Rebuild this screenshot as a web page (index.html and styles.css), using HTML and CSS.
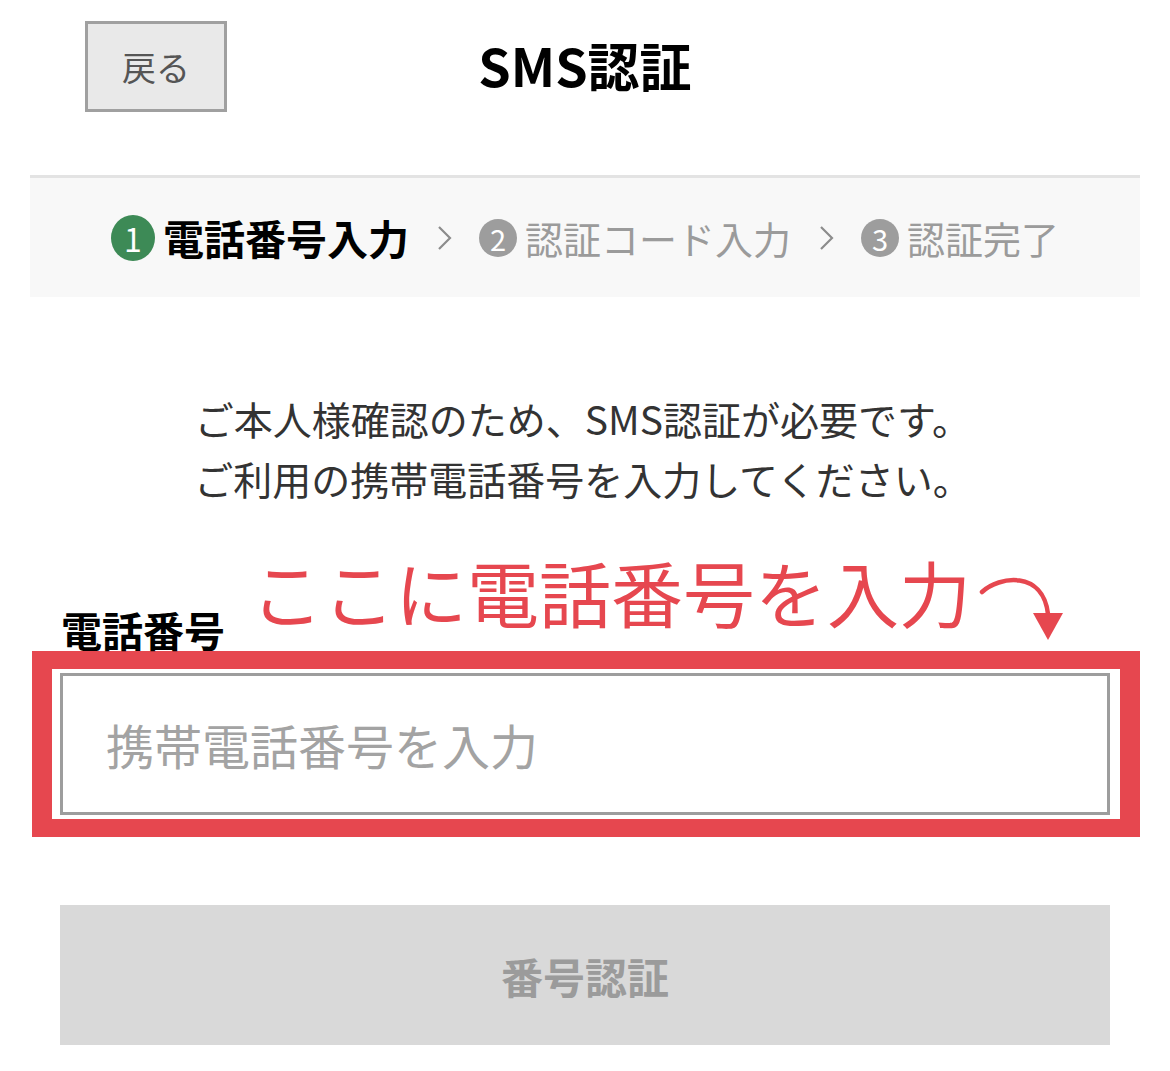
FILE: index.html
```html
<!DOCTYPE html>
<html lang="ja">
<head>
  <meta charset="UTF-8" />
  <meta name="viewport" content="width=device-width, initial-scale=1.0" />
  <title>SMS認証</title>
  <link rel="stylesheet" href="styles.css">
</head>
<body>
  <div class="page">
    <header class="top-bar">
      <button class="back-btn">戻る</button>
      <h1 class="title">SMS認証</h1>
      <div></div>
    </header>

    <div class="steps">
      <div class="step active">
        <span class="num">1</span>
        <span class="label">電話番号入力</span>
      </div>
      <svg class="chev" width="17" height="30" viewBox="0 0 17 30"><polyline points="3,4 14,15 3,26" fill="none" stroke="#8c8c8c" stroke-width="2.2"/></svg>
      <div class="step">
        <span class="num">2</span>
        <span class="label">認証コード入力</span>
      </div>
      <svg class="chev" width="17" height="30" viewBox="0 0 17 30"><polyline points="3,4 14,15 3,26" fill="none" stroke="#8c8c8c" stroke-width="2.2"/></svg>
      <div class="step">
        <span class="num">3</span>
        <span class="label">認証完了</span>
      </div>
    </div>

    <p class="lead">ご本人様確認のため、SMS認証が必要です。<br>ご利用の携帯電話番号を入力してください。</p>

    <div class="field-head">
      <label class="field-label" for="tel">電話番号</label>
      <span class="note">ここに電話番号を入力</span>
      <svg class="note-arrow" width="100" height="75" viewBox="0 0 100 75">
        <path d="M15 22 C 32 6, 76 0, 81 44" fill="none" stroke="#e6474f" stroke-width="4.5" stroke-linecap="round"/>
        <polygon points="66,43 96,43 81,70" fill="#e6474f"/>
      </svg>
    </div>

    <div class="mark">
      <input id="tel" class="tel-input" type="tel" placeholder="携帯電話番号を入力">
    </div>

    <button class="submit-btn" disabled>番号認証</button>
  </div>
</body>
</html>
```

FILE: styles.css
```css
body {
  margin: 0;
  background: #ffffff;
  font-family: "Noto Sans CJK JP", "Noto Sans", sans-serif;
  color: #000;
}
.page {
  width: 1050px;
  margin: 0 auto;
  padding-top: 21px;
}
.top-bar {
  display: grid;
  grid-template-columns: 1fr auto 1fr;
  align-items: center;
}
.back-btn {
  justify-self: start;
  margin-left: 25px;
  width: 142px;
  height: 91px;
  border: 3px solid #a0a0a0;
  background: #e9e9e9;
  color: #555;
  font-family: inherit;
  font-size: 34px;
  padding: 0;
  line-height: 1;
}
.title {
  margin: -3px 0 0;
  font-size: 52px;
  font-weight: bold;
  line-height: 1;
}
.steps {
  margin: 63px -30px 0;
  height: 119px;
  border-top: 3px solid #e3e3e3;
  background: #f8f8f8;
  display: flex;
  justify-content: center;
  align-items: center;
}
.step {
  display: flex;
  align-items: center;
  gap: 8px;
}
.step .num {
  width: 38px;
  height: 38px;
  border-radius: 50%;
  background: #9d9d9d;
  color: #fff;
  font-size: 29px;
  line-height: 38px;
  text-align: center;
}
.step .label {
  font-size: 38px;
  line-height: 1;
  color: #9b9b9b;
}
.step.active .num {
  width: 44px;
  height: 46px;
  line-height: 46px;
  background: #3d8a56;
  font-size: 32px;
}
.step.active .label {
  font-size: 41px;
  font-weight: bold;
  color: #000;
}
.chev {
  margin: 0 26px 0 27px;
}
.lead {
  margin: 91px 0 0;
  padding-right: 4px;
  text-align: center;
  font-size: 39px;
  line-height: 60px;
  color: #333;
}
.field-head {
  margin-top: 47px;
  display: flex;
  align-items: flex-end;
}
.field-label {
  margin-left: 1px;
  font-size: 41px;
  font-weight: bold;
  line-height: 1;
}
.note {
  margin: 0 0 23px 26px;
  font-size: 72px;
  line-height: 1;
  color: #e6474f;
}
.note-arrow {
  margin: 0 0 5px -4px;
}
.mark {
  margin: 1px -30px 0 -28px;
  border: 18px solid #e6474f;
  border-width: 18px 20px 18px 20px;
  padding: 4px 10px 4px 8px;
  background: #fff;
}
.tel-input {
  display: block;
  box-sizing: border-box;
  width: 100%;
  height: 142px;
  border: 3px solid #9d9d9d;
  padding: 0 0 0 43px;
  font-family: inherit;
  font-size: 48px;
  color: #333;
  outline: none;
}
.tel-input::placeholder {
  color: #a3a3a3;
}
.submit-btn {
  display: block;
  width: 100%;
  height: 140px;
  margin-top: 68px;
  border: none;
  background: #d9d9d9;
  color: #9b9b9b;
  font-family: inherit;
  font-size: 42px;
  font-weight: bold;
  padding: 0;
}
```
